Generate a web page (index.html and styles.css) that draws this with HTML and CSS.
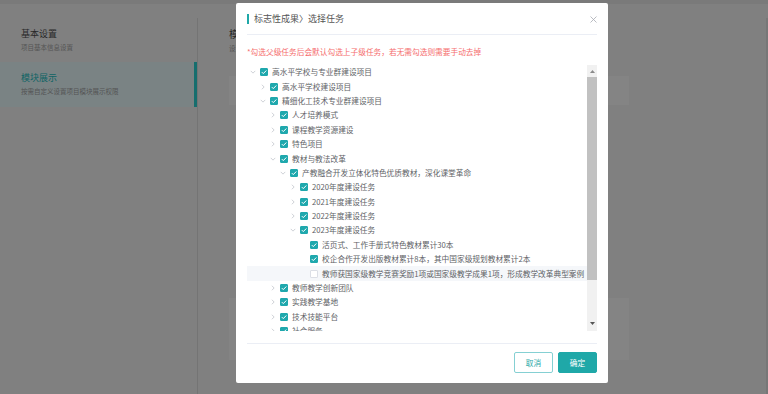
FILE: index.html
```html
<!DOCTYPE html>
<html lang="zh-CN">
<head>
<meta charset="utf-8">
<title>选择任务</title>
<link rel="stylesheet" href="styles.css">
</head>
<body>
<div class="page">
  <div class="topstrip"></div>
  <div class="main">
    <aside class="sidebar">
      <div class="side-item">
        <div class="side-title">基本设置</div>
        <div class="side-sub">项目基本信息设置</div>
      </div>
      <div class="side-item active">
        <div class="side-title">模块展示</div>
        <div class="side-sub">按需自定义设置项目模块展示权限</div>
      </div>
    </aside>
    <section class="content">
      <div class="c-title">模块展示</div>
      <div class="c-sub">设置项目模块展示</div>
      <div class="c-card c-card1"></div>
      <div class="c-card c-card2"></div>
    </section>
    <div class="rightstrip"></div>
  </div>
</div>

<div class="modal">
  <div class="m-head">
    <span class="m-accent"></span>
    <span class="m-title">标志性成果〉选择任务</span>
    <svg class="m-close" width="7" height="7" viewBox="0 0 7 7"><path d="M0.5 0.5 L6.5 6.5 M6.5 0.5 L0.5 6.5" stroke="#a8abb2" stroke-width="0.8" fill="none"/></svg>
  </div>
  <div class="m-divider"></div>
  <div class="m-body">
    <div class="note">*勾选父级任务后会默认勾选上子级任务，若无需勾选则需要手动去掉</div>
    <div class="treebox">
      <div class="tree">
        <div class="row l0"><span class="arr"><svg width="6" height="6" viewBox="0 0 8 8"><path class="dn" d="M1 2.5 L4 5.5 L7 2.5"/></svg></span><span class="cb on"><svg width="8" height="8" viewBox="0 0 8 8"><path d="M1.8 4.1 L3.3 5.6 L6.3 2.5"/></svg></span><span class="lbl">高水平学校与专业群建设项目</span></div>
        <div class="row l1"><span class="arr"><svg width="6" height="6" viewBox="0 0 8 8"><path class="rt" d="M2.5 1 L5.5 4 L2.5 7"/></svg></span><span class="cb on"><svg width="8" height="8" viewBox="0 0 8 8"><path d="M1.8 4.1 L3.3 5.6 L6.3 2.5"/></svg></span><span class="lbl">高水平学校建设项目</span></div>
        <div class="row l1"><span class="arr"><svg width="6" height="6" viewBox="0 0 8 8"><path class="dn" d="M1 2.5 L4 5.5 L7 2.5"/></svg></span><span class="cb on"><svg width="8" height="8" viewBox="0 0 8 8"><path d="M1.8 4.1 L3.3 5.6 L6.3 2.5"/></svg></span><span class="lbl">精细化工技术专业群建设项目</span></div>
        <div class="row l2"><span class="arr"><svg width="6" height="6" viewBox="0 0 8 8"><path class="rt" d="M2.5 1 L5.5 4 L2.5 7"/></svg></span><span class="cb on"><svg width="8" height="8" viewBox="0 0 8 8"><path d="M1.8 4.1 L3.3 5.6 L6.3 2.5"/></svg></span><span class="lbl">人才培养模式</span></div>
        <div class="row l2"><span class="arr"><svg width="6" height="6" viewBox="0 0 8 8"><path class="rt" d="M2.5 1 L5.5 4 L2.5 7"/></svg></span><span class="cb on"><svg width="8" height="8" viewBox="0 0 8 8"><path d="M1.8 4.1 L3.3 5.6 L6.3 2.5"/></svg></span><span class="lbl">课程教学资源建设</span></div>
        <div class="row l2"><span class="arr"><svg width="6" height="6" viewBox="0 0 8 8"><path class="rt" d="M2.5 1 L5.5 4 L2.5 7"/></svg></span><span class="cb on"><svg width="8" height="8" viewBox="0 0 8 8"><path d="M1.8 4.1 L3.3 5.6 L6.3 2.5"/></svg></span><span class="lbl">特色项目</span></div>
        <div class="row l2"><span class="arr"><svg width="6" height="6" viewBox="0 0 8 8"><path class="dn" d="M1 2.5 L4 5.5 L7 2.5"/></svg></span><span class="cb on"><svg width="8" height="8" viewBox="0 0 8 8"><path d="M1.8 4.1 L3.3 5.6 L6.3 2.5"/></svg></span><span class="lbl">教材与教法改革</span></div>
        <div class="row l3"><span class="arr"><svg width="6" height="6" viewBox="0 0 8 8"><path class="dn" d="M1 2.5 L4 5.5 L7 2.5"/></svg></span><span class="cb on"><svg width="8" height="8" viewBox="0 0 8 8"><path d="M1.8 4.1 L3.3 5.6 L6.3 2.5"/></svg></span><span class="lbl">产教融合开发立体化特色优质教材，深化课堂革命</span></div>
        <div class="row l4"><span class="arr"><svg width="6" height="6" viewBox="0 0 8 8"><path class="rt" d="M2.5 1 L5.5 4 L2.5 7"/></svg></span><span class="cb on"><svg width="8" height="8" viewBox="0 0 8 8"><path d="M1.8 4.1 L3.3 5.6 L6.3 2.5"/></svg></span><span class="lbl">2020年度建设任务</span></div>
        <div class="row l4"><span class="arr"><svg width="6" height="6" viewBox="0 0 8 8"><path class="rt" d="M2.5 1 L5.5 4 L2.5 7"/></svg></span><span class="cb on"><svg width="8" height="8" viewBox="0 0 8 8"><path d="M1.8 4.1 L3.3 5.6 L6.3 2.5"/></svg></span><span class="lbl">2021年度建设任务</span></div>
        <div class="row l4"><span class="arr"><svg width="6" height="6" viewBox="0 0 8 8"><path class="rt" d="M2.5 1 L5.5 4 L2.5 7"/></svg></span><span class="cb on"><svg width="8" height="8" viewBox="0 0 8 8"><path d="M1.8 4.1 L3.3 5.6 L6.3 2.5"/></svg></span><span class="lbl">2022年度建设任务</span></div>
        <div class="row l4"><span class="arr"><svg width="6" height="6" viewBox="0 0 8 8"><path class="dn" d="M1 2.5 L4 5.5 L7 2.5"/></svg></span><span class="cb on"><svg width="8" height="8" viewBox="0 0 8 8"><path d="M1.8 4.1 L3.3 5.6 L6.3 2.5"/></svg></span><span class="lbl">2023年度建设任务</span></div>
        <div class="row l5"><span class="arr"></span><span class="cb on"><svg width="8" height="8" viewBox="0 0 8 8"><path d="M1.8 4.1 L3.3 5.6 L6.3 2.5"/></svg></span><span class="lbl">活页式、工作手册式特色教材累计30本</span></div>
        <div class="row l5"><span class="arr"></span><span class="cb on"><svg width="8" height="8" viewBox="0 0 8 8"><path d="M1.8 4.1 L3.3 5.6 L6.3 2.5"/></svg></span><span class="lbl">校企合作开发出版教材累计8本，其中国家级规划教材累计2本</span></div>
        <div class="row l5 hover"><span class="arr"></span><span class="cb"></span><span class="lbl">教师获国家级教学竞赛奖励1项或国家级教学成果1项，形成教学改革典型案例</span></div>
        <div class="row l2"><span class="arr"><svg width="6" height="6" viewBox="0 0 8 8"><path class="rt" d="M2.5 1 L5.5 4 L2.5 7"/></svg></span><span class="cb on"><svg width="8" height="8" viewBox="0 0 8 8"><path d="M1.8 4.1 L3.3 5.6 L6.3 2.5"/></svg></span><span class="lbl">教师教学创新团队</span></div>
        <div class="row l2"><span class="arr"><svg width="6" height="6" viewBox="0 0 8 8"><path class="rt" d="M2.5 1 L5.5 4 L2.5 7"/></svg></span><span class="cb on"><svg width="8" height="8" viewBox="0 0 8 8"><path d="M1.8 4.1 L3.3 5.6 L6.3 2.5"/></svg></span><span class="lbl">实践教学基地</span></div>
        <div class="row l2"><span class="arr"><svg width="6" height="6" viewBox="0 0 8 8"><path class="rt" d="M2.5 1 L5.5 4 L2.5 7"/></svg></span><span class="cb on"><svg width="8" height="8" viewBox="0 0 8 8"><path d="M1.8 4.1 L3.3 5.6 L6.3 2.5"/></svg></span><span class="lbl">技术技能平台</span></div>
        <div class="row l2"><span class="arr"><svg width="6" height="6" viewBox="0 0 8 8"><path class="rt" d="M2.5 1 L5.5 4 L2.5 7"/></svg></span><span class="cb on"><svg width="8" height="8" viewBox="0 0 8 8"><path d="M1.8 4.1 L3.3 5.6 L6.3 2.5"/></svg></span><span class="lbl">社会服务</span></div>
      </div>
      <div class="sb">
        <div class="sb-btn sb-up"><svg width="5" height="3" viewBox="0 0 5 3"><polygon points="0,3 2.5,0 5,3" fill="#8a8a8a"/></svg></div>
        <div class="sb-thumb"></div>
        <div class="sb-fill"></div>
        <div class="sb-btn sb-down"><svg width="5" height="3" viewBox="0 0 5 3"><polygon points="0,0 5,0 2.5,3" fill="#555"/></svg></div>
      </div>
    </div>
  </div>
  <div class="m-foot">
    <button class="btn btn-plain">取消</button>
    <button class="btn btn-primary">确定</button>
  </div>
</div>
</body>
</html>
```

FILE: styles.css
```css
* { box-sizing: border-box; }
html, body {
  margin: 0;
  padding: 0;
  width: 768px;
  height: 394px;
  overflow: hidden;
}
body {
  background: #808080;
  font-family: "Noto Sans CJK SC", "Noto Sans", sans-serif;
  position: relative;
}

/* background page (dimmed by mask) */
.page {
  display: flex;
  flex-direction: column;
  height: 394px;
}
.topstrip {
  height: 4px;
  background: #7a7a7a;
}
.main {
  flex: 1;
  display: flex;
  padding-top: 14px;
}
.sidebar {
  width: 198px;
  border-right: 1px solid #747474;
  flex-shrink: 0;
}
.side-item {
  height: 44px;
  padding: 10px 0 0 21px;
}
.side-item.active {
  height: 45px;
  background: #7a8384;
  box-shadow: inset -3px 0 0 #166e6e;
  margin-right: 0;
}
.side-title {
  font-size: 9px;
  line-height: 12px;
  color: #282828;
}
.side-item.active .side-title { color: #0f6464; }
.side-sub {
  margin-top: 3px;
  font-size: 6.5px;
  line-height: 8px;
  color: #545454;
  white-space: nowrap;
}
.content {
  flex: 1;
  padding: 10px 0 0 31px;
  display: flex;
  flex-direction: column;
}
.c-title {
  font-size: 10px;
  line-height: 12px;
  color: #282828;
}
.c-sub {
  margin-top: 4px;
  font-size: 6.5px;
  line-height: 8px;
  color: #545454;
}
.c-card {
  background: #848484;
  width: 400px;
}
.c-card1 { margin-top: 24px; height: 29px; }
.c-card2 { margin-top: 193px; height: 62px; }
.rightstrip {
  width: 2px;
  background: #777;
}

/* modal */
.modal {
  position: absolute;
  left: 236px;
  top: 3px;
  width: 372px;
  height: 380px;
  background: #fff;
  border-radius: 2px;
  display: flex;
  flex-direction: column;
}
.m-head {
  height: 31px;
  padding: 1px 11px 0;
  display: flex;
  align-items: center;
}
.m-accent {
  width: 2px;
  height: 10px;
  background: #1fa8a8;
  margin-right: 5px;
}
.m-title {
  font-size: 9px;
  line-height: 12px;
  color: #555;
  flex: 1;
}
.m-close { display: block; margin-right: 0; }
.m-divider {
  height: 1px;
  margin: 0 11px;
  background: #ebeef5;
}
.m-body {
  padding: 11px 11px 0;
}
.note {
  font-size: 7.7px;
  line-height: 12px;
  color: #f56c6c;
  white-space: nowrap;
}
.treebox {
  margin-top: 7px;
  height: 266px;
  display: flex;
}
.tree {
  flex: 1;
  overflow: hidden;
  min-width: 0;
}
.row {
  height: 14.4px;
  display: flex;
  align-items: center;
  white-space: nowrap;
  font-size: 7.7px;
  color: #606266;
}
.row.hover { background: #f5f7fa; }
.l0 { padding-left: 0; }
.l1 { padding-left: 10px; }
.l2 { padding-left: 20px; }
.l3 { padding-left: 30px; }
.l4 { padding-left: 40px; }
.l5 { padding-left: 50px; }
.arr {
  width: 13px;
  height: 8px;
  flex-shrink: 0;
  display: flex;
  align-items: center;
  padding-left: 3px;
}
.arr svg { display: block; }
.arr path {
  fill: none;
  stroke: #b8bcc4;
  stroke-width: 0.9;
}
.cb {
  width: 8px;
  height: 8px;
  flex-shrink: 0;
  border-radius: 1px;
  border: 0.8px solid #dcdfe6;
  background: #fff;
  margin-right: 4px;
  display: flex;
  align-items: center;
  justify-content: center;
}
.cb.on {
  background: #1fa8ad;
  border-color: #1fa8ad;
}
.cb svg { display: block; flex-shrink: 0; }
.cb path {
  fill: none;
  stroke: #fff;
  stroke-width: 1;
}
.lbl { line-height: 14px; }

.sb {
  width: 10px;
  background: #f1f1f1;
  display: flex;
  flex-direction: column;
  flex-shrink: 0;
}
.sb-btn {
  display: flex;
  align-items: center;
  justify-content: center;
}
.sb-up { height: 12px; }
.sb-down { height: 15px; }
.sb-thumb {
  height: 203px;
  background: #c1c1c1;
}
.sb-fill { flex: 1; }

.m-foot {
  margin: 12px 11px 0;
  border-top: 1px solid #ebeef5;
  padding-top: 8px;
  display: flex;
  justify-content: flex-end;
  gap: 5px;
}
.btn {
  width: 39px;
  height: 21px;
  font-family: "Noto Sans CJK SC", sans-serif;
  font-size: 7.7px;
  border-radius: 2px;
  padding: 0;
  display: flex;
  align-items: center;
  justify-content: center;
}
.btn-plain {
  background: #fff;
  border: 1px solid #85d0d3;
  color: #1fa8a8;
}
.btn-primary {
  background: #1fa8a8;
  border: 1px solid #1fa8a8;
  color: #fff;
}
```
